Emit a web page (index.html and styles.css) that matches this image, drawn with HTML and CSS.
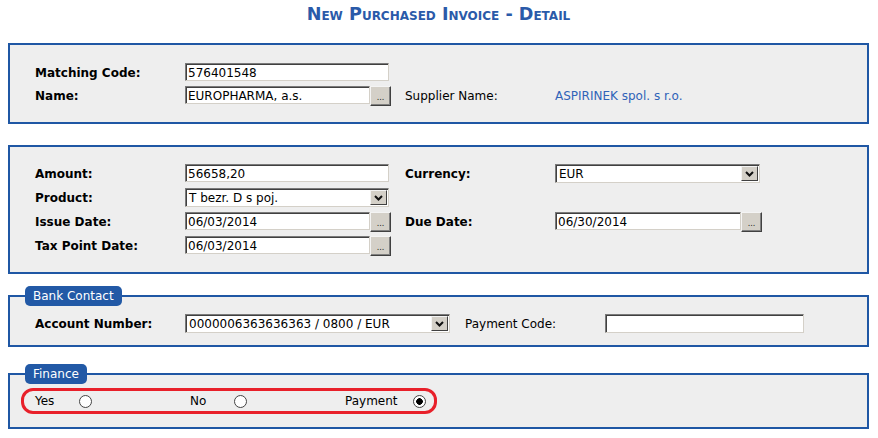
FILE: index.html
```html
<!DOCTYPE html>
<html>
<head>
<meta charset="utf-8">
<link rel="stylesheet" href="styles.css">
</head>
<body>
<h1 class="title">New Purchased Invoice - Detail</h1>

<div class="panel p1">
  <div class="grid">
    <div class="lbl">Matching Code:</div>
    <div><div class="in w204">576401548</div></div>
    <div></div><div></div>

    <div class="lbl">Name:</div>
    <div class="combo"><div class="in w185">EUROPHARMA, a.s.</div><div class="btn">...</div></div>
    <div class="txt">Supplier Name:</div>
    <div class="txt val">ASPIRINEK spol. s r.o.</div>
  </div>
</div>

<div class="panel p2">
  <div class="grid">
    <div class="lbl">Amount:</div>
    <div><div class="in w204">56658,20</div></div>
    <div class="lbl">Currency:</div>
    <div><div class="sel w205"><span class="sel-txt">EUR</span><span class="arrow"><svg width="9" height="6" viewBox="0 0 9 6"><path d="M1 1 L4.5 4.5 L8 1" fill="none" stroke="#111" stroke-width="2"/></svg></span></div></div>

    <div class="lbl">Product:</div>
    <div><div class="sel w204"><span class="sel-txt">T bezr. D s poj.</span><span class="arrow"><svg width="9" height="6" viewBox="0 0 9 6"><path d="M1 1 L4.5 4.5 L8 1" fill="none" stroke="#111" stroke-width="2"/></svg></span></div></div>
    <div></div><div></div>

    <div class="lbl">Issue Date:</div>
    <div class="combo"><div class="in w185">06/03/2014</div><div class="btn">...</div></div>
    <div class="lbl">Due Date:</div>
    <div class="combo"><div class="in w186">06/30/2014</div><div class="btn">...</div></div>

    <div class="lbl">Tax Point Date:</div>
    <div class="combo"><div class="in w185">06/03/2014</div><div class="btn">...</div></div>
    <div></div><div></div>
  </div>
</div>

<fieldset class="fs bank">
  <legend class="legend">Bank Contact</legend>
  <div class="bank-row">
    <div class="lbl">Account Number:</div>
    <div><div class="sel w265"><span class="sel-txt">0000006363636363 / 0800 / EUR</span><span class="arrow"><svg width="9" height="6" viewBox="0 0 9 6"><path d="M1 1 L4.5 4.5 L8 1" fill="none" stroke="#111" stroke-width="2"/></svg></span></div></div>
    <div class="txt">Payment Code:</div>
    <div><div class="in w199"></div></div>
  </div>
</fieldset>

<fieldset class="fs finance">
  <legend class="legend">Finance</legend>
  <div class="fin">
    <div class="fin-item"><span class="fin-lbl">Yes</span><span class="radio"></span></div>
    <div class="fin-item"><span class="fin-lbl">No</span><span class="radio"></span></div>
    <div class="fin-item last"><span class="fin-lbl">Payment</span><span class="radio checked"></span></div>
  </div>
</fieldset>
</body>
</html>
```

FILE: styles.css
```css
body {
  margin: 0;
  padding: 0 9px 0 8px;
  font-family: "DejaVu Sans", Verdana, sans-serif;
  font-size: 12px;
  color: #000;
  background: #fff;
}

.title {
  margin: 0 0 19px 0;
  padding-top: 4px;
  line-height: 20px;
  text-align: center;
  font-size: 17.6px;
  font-weight: bold;
  font-variant: small-caps;
  color: #2a5aa9;
}

.panel {
  background: #eeeeee;
  border: 2px solid #1f57a4;
}

.p1 {
  padding: 18px 0 13px 25px;
  margin-bottom: 21px;
}

.p2 {
  padding: 17px 0 12px 25px;
  margin-bottom: 12px;
}

.grid {
  display: grid;
  grid-template-columns: 150px 220px 150px auto;
  align-items: start;
}

.p1 .grid { grid-auto-rows: 23px; }
.p2 .grid { grid-auto-rows: 24px; }

.lbl {
  font-weight: bold;
  line-height: 20px;
  white-space: nowrap;
}

.txt {
  line-height: 20px;
  white-space: nowrap;
}

.val { color: #2f63b8; }

.combo {
  display: flex;
  align-items: flex-start;
}

.in {
  box-sizing: border-box;
  height: 18px;
  background: #fff;
  border-style: solid;
  border-width: 1px;
  border-color: #7a7a7a #d4d0c8 #d4d0c8 #7a7a7a;
  box-shadow: inset 1px 1px 0 #404040;
  padding: 1px 0 0 2px;
  line-height: 16px;
  white-space: nowrap;
  overflow: hidden;
}

.w185 { width: 185px; }
.w186 { width: 186px; }
.w199 { width: 199px; height: 19px; }
.w204 { width: 204px; }
.w205 { width: 205px; }
.w265 { width: 265px; }

.btn {
  box-sizing: border-box;
  width: 21px;
  height: 20px;
  background: #d4d0c8;
  border: 1px solid;
  border-color: #f4f4f4 #404040 #404040 #f4f4f4;
  box-shadow: inset -1px -1px 0 #808080;
  font-size: 8px;
  line-height: 8px;
  text-align: center;
  display: flex;
  align-items: flex-end;
  justify-content: center;
  padding-bottom: 3px;
  color: #222;
}

.sel {
  box-sizing: border-box;
  height: 19px;
  background: #fff;
  border-style: solid;
  border-width: 1px;
  border-color: #7a7a7a #d4d0c8 #d4d0c8 #7a7a7a;
  box-shadow: inset 1px 1px 0 #404040;
  padding: 1px 1px 1px 1px;
  display: flex;
  align-items: stretch;
}

.sel-txt {
  flex: 1;
  padding-left: 2px;
  line-height: 17px;
  white-space: nowrap;
  overflow: hidden;
}

.arrow {
  box-sizing: border-box;
  width: 17px;
  background: #d4d0c8;
  border: 1px solid;
  border-color: #f4f4f4 #404040 #404040 #f4f4f4;
  display: flex;
  align-items: center;
  justify-content: center;
}

.arrow svg { display: block; }

.fs {
  margin: 0;
  min-width: 0;
  background: #eeeeee;
  border: 2px solid #1f57a4;
  padding: 8px 0 12px 15px;
}

.bank { margin-bottom: 17px; }

.finance { padding: 4px 0 13px 15px; }

.legend {
  background: #2259a6;
  color: #fff;
  border-radius: 5px;
  padding: 0 8px;
  line-height: 20px;
  font-size: 12px;
}

.bank-row {
  margin-left: 10px;
  display: grid;
  grid-template-columns: 150px 280px 140px auto;
  align-items: start;
  height: 19px;
}

.bank-row .lbl, .bank-row .txt { line-height: 20px; }

.fin {
  margin-left: -4px;
  display: inline-flex;
  align-items: center;
  box-sizing: border-box;
  height: 26px;
  border: 3px solid #e8202a;
  border-radius: 12px;
  padding: 0 8px 0 11px;
}

.fin-item {
  display: flex;
  align-items: center;
  width: 155px;
}

.fin-item.last { width: auto; }

.fin-lbl {
  min-width: 29px;
  padding-right: 15px;
  line-height: 20px;
}

.radio {
  box-sizing: border-box;
  width: 13px;
  height: 13px;
  border-radius: 50%;
  border: 1px solid #444;
  background: #fff;
}

.radio.checked {
  background: radial-gradient(circle, #000 0 3px, #fff 3.6px);
}
```
